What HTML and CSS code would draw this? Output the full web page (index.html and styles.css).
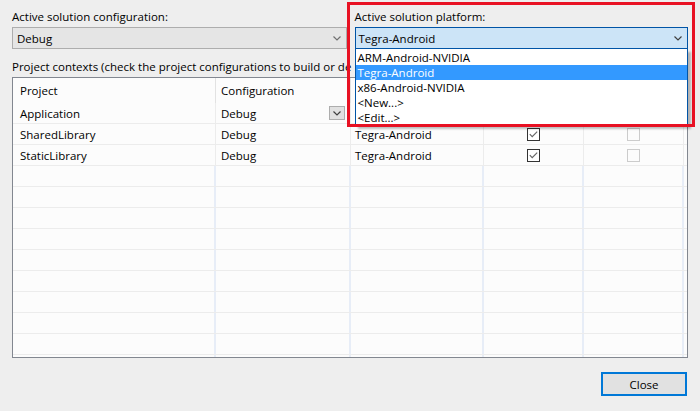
FILE: index.html
```html
<!DOCTYPE html>
<html lang="en">
<head>
    <meta charset="UTF-8">
    <title>Configuration Manager</title>
    <link rel="stylesheet" href="styles.css">
</head>
<body>
    <div class="dialog">
        <div class="top">
            <div class="field config">
                <div class="label">Active solution configuration:</div>
                <div class="combo">
                    <span>Debug</span>
                    <svg class="chev" width="8" height="5" viewBox="0 0 8 5"><polyline points="0.5,0.5 4,4 7.5,0.5"/></svg>
                </div>
            </div>
            <div class="field platform">
                <div class="label">Active solution platform:</div>
                <div class="combo focused">
                    <span>Tegra-Android</span>
                    <svg class="chev dark" width="8" height="5" viewBox="0 0 8 5"><polyline points="0.5,0.5 4,4 7.5,0.5"/></svg>
                </div>
                <ul class="droplist">
                    <li>ARM-Android-NVIDIA</li>
                    <li class="selected">Tegra-Android</li>
                    <li>x86-Android-NVIDIA</li>
                    <li>&lt;New...&gt;</li>
                    <li>&lt;Edit...&gt;</li>
                </ul>
            </div>
        </div>

        <div class="label contexts">Project contexts (check the project configurations to build or de</div>

        <div class="grid-wrap">
            <div class="row head">
                <div class="cell c1">Project</div>
                <div class="cell c2">Configuration</div>
                <div class="cell c3"></div>
                <div class="cell c4"></div>
                <div class="cell c5"></div>
                <div class="cell fill"></div>
            </div>
            <div class="row">
                <div class="cell c1">Application</div>
                <div class="cell c2">Debug<span class="dd"><svg class="chev dark" width="8" height="5" viewBox="0 0 8 5"><polyline points="0.5,0.5 4,4 7.5,0.5"/></svg></span></div>
                <div class="cell c3"></div>
                <div class="cell box"><span class="check"><svg width="11" height="11" viewBox="0 0 11 11"><polyline points="1.8,5.2 4.2,7.6 9.2,2.6"/></svg></span></div>
                <div class="cell box"><span class="check off"></span></div>
                <div class="cell fill"></div>
            </div>
            <div class="row">
                <div class="cell c1">SharedLibrary</div>
                <div class="cell c2">Debug</div>
                <div class="cell c3">Tegra-Android</div>
                <div class="cell box"><span class="check"><svg width="11" height="11" viewBox="0 0 11 11"><polyline points="1.8,5.2 4.2,7.6 9.2,2.6"/></svg></span></div>
                <div class="cell box"><span class="check off"></span></div>
                <div class="cell fill"></div>
            </div>
            <div class="row">
                <div class="cell c1">StaticLibrary</div>
                <div class="cell c2">Debug</div>
                <div class="cell c3">Tegra-Android</div>
                <div class="cell box"><span class="check"><svg width="11" height="11" viewBox="0 0 11 11"><polyline points="1.8,5.2 4.2,7.6 9.2,2.6"/></svg></span></div>
                <div class="cell box"><span class="check off"></span></div>
                <div class="cell fill"></div>
            </div>
            <div class="row empty"><div class="cell"></div><div class="cell"></div><div class="cell"></div><div class="cell"></div><div class="cell"></div><div class="cell fill"></div></div>
            <div class="row empty"><div class="cell"></div><div class="cell"></div><div class="cell"></div><div class="cell"></div><div class="cell"></div><div class="cell fill"></div></div>
            <div class="row empty"><div class="cell"></div><div class="cell"></div><div class="cell"></div><div class="cell"></div><div class="cell"></div><div class="cell fill"></div></div>
            <div class="row empty"><div class="cell"></div><div class="cell"></div><div class="cell"></div><div class="cell"></div><div class="cell"></div><div class="cell fill"></div></div>
            <div class="row empty"><div class="cell"></div><div class="cell"></div><div class="cell"></div><div class="cell"></div><div class="cell"></div><div class="cell fill"></div></div>
            <div class="row empty"><div class="cell"></div><div class="cell"></div><div class="cell"></div><div class="cell"></div><div class="cell"></div><div class="cell fill"></div></div>
            <div class="row empty"><div class="cell"></div><div class="cell"></div><div class="cell"></div><div class="cell"></div><div class="cell"></div><div class="cell fill"></div></div>
            <div class="row empty"><div class="cell"></div><div class="cell"></div><div class="cell"></div><div class="cell"></div><div class="cell"></div><div class="cell fill"></div></div>
            <div class="row empty"><div class="cell"></div><div class="cell"></div><div class="cell"></div><div class="cell"></div><div class="cell"></div><div class="cell fill"></div></div>
            <div class="row empty"><div class="cell"></div><div class="cell"></div><div class="cell"></div><div class="cell"></div><div class="cell"></div><div class="cell fill"></div></div>
        </div>

        <div class="buttons">
            <button class="close">Close</button>
        </div>

        <div class="annot"></div>
    </div>
</body>
</html>
```

FILE: styles.css
```css
body { margin: 0; background: #eeeeee; font-family: "Open Sans", "Liberation Sans", sans-serif; font-size: 11.5px; color: #000; }
.dialog { position: relative; width: 700px; height: 411px; padding: 9px 12px 0 12px; box-sizing: border-box; }

.top { display: flex; gap: 8px; }
.field { position: relative; }
.field.config { width: 335px; }
.field.platform { width: 334px; }
.label { height: 15px; line-height: 15px; white-space: nowrap; }
.combo { margin-top: 3px; height: 22px; box-sizing: border-box; border: 1px solid #adadad; background: #e5e5e5; display: flex; align-items: center; justify-content: space-between; padding: 0 5px 0 4px; }
.combo.focused { background: #cce4f7; border-color: #0054a6; padding-left: 3px; }
.chev polyline { fill: none; stroke: #707070; stroke-width: 1.2; }
.chev.dark polyline { stroke: #404040; }

.droplist { position: absolute; left: 0; top: 40px; width: 333px; margin: 0; padding: 1px 0 0 0; list-style: none; background: #fff; border: 1px solid #0054a6; border-top: none; box-sizing: border-box; box-shadow: 3px 3px 2px rgba(0, 0, 0, 0.25); }
.droplist li { height: 15px; line-height: 15px; padding-left: 2px; white-space: nowrap; }
.droplist li.selected { background: #3399ff; color: #fff; }

.contexts { margin-top: 10px; }

.grid-wrap { margin-top: 3px; width: 676px; height: 281px; border: 1px solid #828790; box-sizing: border-box; background: #fcfcfc; overflow: hidden; }
.row { display: grid; grid-template-columns: 203px 135px 133px 100px 100px 3px; height: 21px; border-bottom: 1px solid #ececec; box-sizing: border-box; }
.row.head { height: 25px; border-bottom: none; }
.cell { display: flex; align-items: center; border-right: 1px solid #ececec; box-sizing: border-box; white-space: nowrap; overflow: hidden; }
.head .cell { border-right-color: #e2e2e2; }
.row.empty .cell { border-right: 2px solid #e7edf7; }
.row .cell.fill { border-right: none; }
.c1 { padding-left: 7px; }
.c2 { padding-left: 5px; }
.c3 { padding-left: 4px; }
.box { justify-content: center; }

.dd { width: 16px; height: 14px; margin-left: auto; margin-right: 5px; border: 1px solid #adadad; background: #e1e1e1; box-sizing: border-box; display: flex; align-items: center; justify-content: center; }

.check { display: block; width: 13px; height: 13px; border: 1px solid #333; background: #fff; box-sizing: border-box; }
.check svg { display: block; }
.check polyline { fill: none; stroke: #666; stroke-width: 1.2; }
.check.off { border-color: #cccccc; background: #fcfcfc; }

.buttons { display: flex; justify-content: flex-end; margin-top: 14px; padding-right: 1px; }
.close { width: 86px; height: 24px; padding: 0; border: 2px solid #0078d7; background: #e1e1e1; font: inherit; color: #000; }

.annot { position: absolute; left: 347px; top: 2px; width: 348px; height: 125px; border: 3px solid #e81123; box-sizing: border-box; pointer-events: none; }
```
